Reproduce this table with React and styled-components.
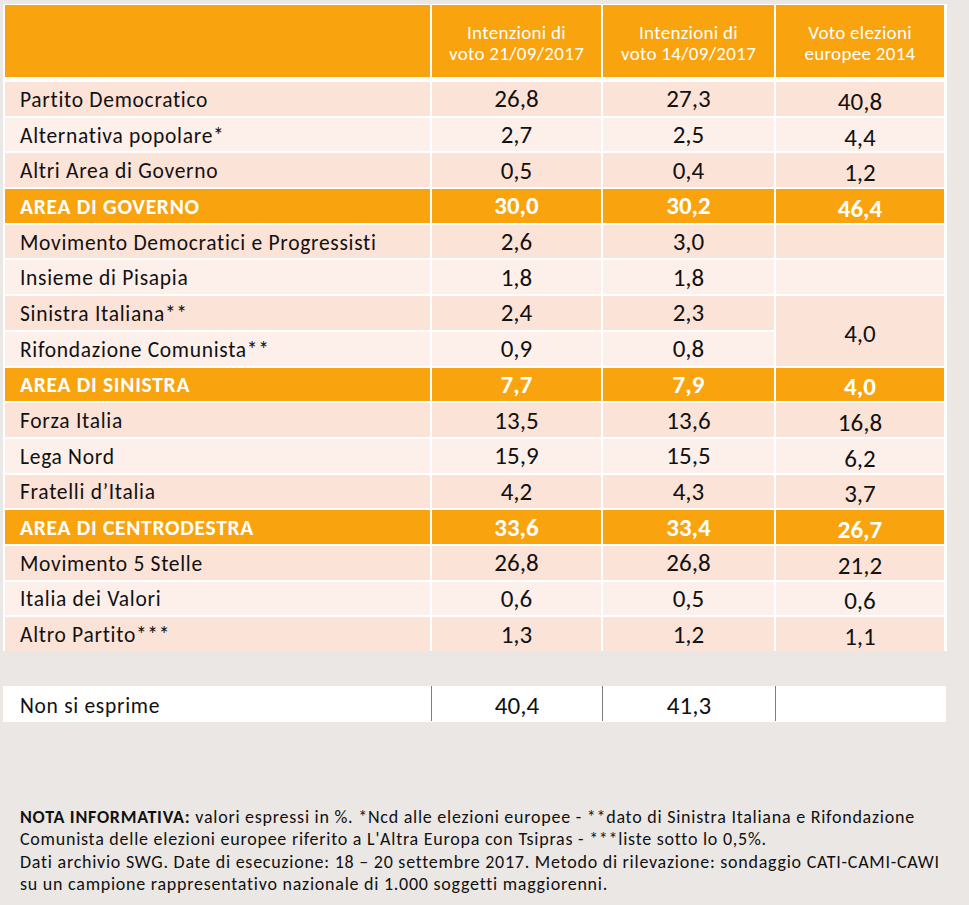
import React from 'react';
import styled, { createGlobalStyle } from 'styled-components';

const GlobalStyle = createGlobalStyle`
  body {
    margin: 0;
    background: #ebe7e4;
    font-family: Carlito, Lato, "Liberation Sans", sans-serif;
    color: #111;
  }
`;

const rows = [
  { name: 'Partito Democratico', a: '26,8', b: '27,3', c: '40,8', tone: 'dark' },
  { name: 'Alternativa popolare*', a: '2,7', b: '2,5', c: '4,4', tone: 'light' },
  { name: 'Altri Area di Governo', a: '0,5', b: '0,4', c: '1,2', tone: 'dark' },
  { name: 'AREA DI GOVERNO', a: '30,0', b: '30,2', c: '46,4', tone: 'area' },
  { name: 'Movimento Democratici e Progressisti', a: '2,6', b: '3,0', c: '', tone: 'dark' },
  { name: 'Insieme di Pisapia', a: '1,8', b: '1,8', c: '', tone: 'light' },
  { name: 'Sinistra Italiana**', a: '2,4', b: '2,3', c: '4,0', span: 2, tone: 'dark' },
  { name: 'Rifondazione Comunista**', a: '0,9', b: '0,8', c: null, tone: 'light' },
  { name: 'AREA DI SINISTRA', a: '7,7', b: '7,9', c: '4,0', tone: 'area' },
  { name: 'Forza Italia', a: '13,5', b: '13,6', c: '16,8', tone: 'dark' },
  { name: 'Lega Nord', a: '15,9', b: '15,5', c: '6,2', tone: 'light' },
  { name: 'Fratelli d\u2019Italia', a: '4,2', b: '4,3', c: '3,7', tone: 'dark' },
  { name: 'AREA DI CENTRODESTRA', a: '33,6', b: '33,4', c: '26,7', tone: 'area' },
  { name: 'Movimento 5 Stelle', a: '26,8', b: '26,8', c: '21,2', tone: 'dark' },
  { name: 'Italia dei Valori', a: '0,6', b: '0,5', c: '0,6', tone: 'light' },
  { name: 'Altro Partito***', a: '1,3', b: '1,2', c: '1,1', tone: 'dark' },
];

const tones = {
  dark: '#fce3d7',
  light: '#fdf0eb',
  area: '#f9a30f',
};

const Page = styled.div`
  padding: 4px 0 0 3px;
  width: 944px;
`;

const Table = styled.div`
  display: grid;
  grid-template-columns: 425px 169px 171px 168px;
  grid-template-rows: 75px repeat(16, 33.7px);
  gap: 2px;
  padding: 1px 2px 0 2px;
  background: #fff;
`;

const HeadCell = styled.div`
  background: #f9a30f;
  color: #fff;
  font-size: 19px;
  font-weight: 300;
  letter-spacing: 0.3px;
  line-height: 21px;
  text-align: center;
  display: flex;
  align-items: center;
  justify-content: center;
  padding-top: 4px;
  margin-bottom: 3px;
`;

const Label = styled.div`
  background: ${(p) => tones[p.$tone]};
  color: ${(p) => (p.$tone === 'area' ? '#fff' : '#111')};
  font-weight: ${(p) => (p.$tone === 'area' ? 700 : 400)};
  font-size: 21.5px;
  letter-spacing: 0.7px;
  display: flex;
  align-items: center;
  padding: 2px 0 0 15px;
  white-space: nowrap;
`;

const Value = styled.div`
  background: ${(p) => tones[p.$tone]};
  color: ${(p) => (p.$tone === 'area' ? '#fff' : '#111')};
  font-weight: ${(p) => (p.$tone === 'area' ? 700 : 400)};
  font-size: 25px;
  display: flex;
  align-items: center;
  justify-content: center;
  padding-top: ${(p) => (p.$low ? '5px' : '0')};
  grid-row: ${(p) => (p.$span ? `span ${p.$span}` : 'auto')};
`;

const Spacer = styled.div`
  height: 35px;
`;

const Bottom = styled.div`
  display: grid;
  grid-template-columns: 428px 171px 173px 171px;
  height: 36px;
  background: #fff;
  width: 943px;
`;

const BottomCell = styled.div`
  display: flex;
  align-items: center;
  justify-content: ${(p) => (p.$label ? 'flex-start' : 'center')};
  padding: ${(p) => (p.$label ? '2px 0 0 17px' : '4px 0 0 0')};
  font-size: ${(p) => (p.$label ? '21.5px' : '25px')};
  letter-spacing: ${(p) => (p.$label ? '0.7px' : '0')};
  border-left: ${(p) => (p.$label ? 'none' : '1px solid #7c7c7c')};
  margin-bottom: ${(p) => (p.$label ? '0' : '2px')};
`;

const Note = styled.div`
  margin-top: 84px;
  padding-left: 17px;
  font-size: 18px;
  letter-spacing: 0.75px;
  line-height: 22.4px;
  color: #111;
  white-space: nowrap;
`;

const Line = styled.div``;

const App = () => (
  <Page>
    <GlobalStyle />
    <Table>
      <HeadCell />
      <HeadCell>Intenzioni di<br />voto 21/09/2017</HeadCell>
      <HeadCell>Intenzioni di<br />voto 14/09/2017</HeadCell>
      <HeadCell>Voto elezioni<br />europee 2014</HeadCell>
      {rows.map((r) => (
        <React.Fragment key={r.name}>
          <Label $tone={r.tone}>{r.name}</Label>
          <Value $tone={r.tone}>{r.a}</Value>
          <Value $tone={r.tone}>{r.b}</Value>
          {r.c !== null && (
            <Value $tone={r.tone} $span={r.span} $low>{r.c}</Value>
          )}
        </React.Fragment>
      ))}
    </Table>
    <Spacer />
    <Bottom>
      <BottomCell $label>Non si esprime</BottomCell>
      <BottomCell>40,4</BottomCell>
      <BottomCell>41,3</BottomCell>
      <BottomCell />
    </Bottom>
    <Note>
      <Line>
        <b>NOTA INFORMATIVA:</b> valori espressi in %. *Ncd alle elezioni europee - **dato di Sinistra Italiana e Rifondazione
      </Line>
      <Line>Comunista delle elezioni europee riferito a L'Altra Europa con Tsipras - ***liste sotto lo 0,5%.</Line>
      <Line>Dati archivio SWG. Date di esecuzione: 18 – 20 settembre 2017. Metodo di rilevazione: sondaggio CATI-CAMI-CAWI</Line>
      <Line>su un campione rappresentativo nazionale di 1.000 soggetti maggiorenni.</Line>
    </Note>
  </Page>
);

export default App;
